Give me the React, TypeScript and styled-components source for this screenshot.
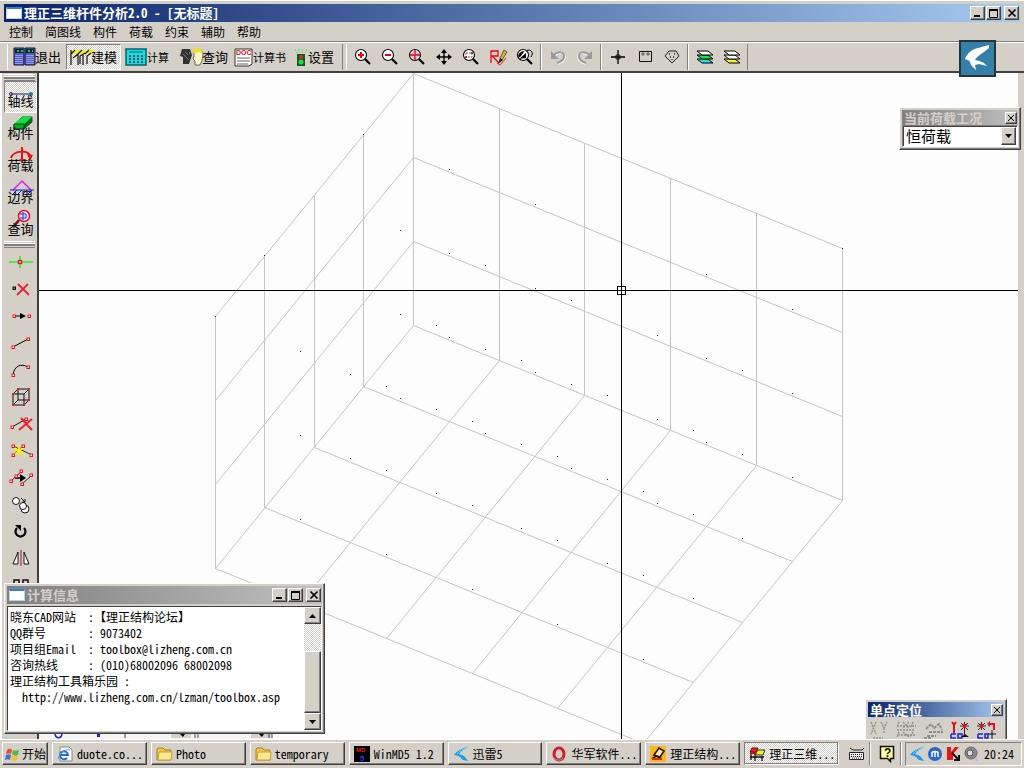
import React from "react";
import styled, { createGlobalStyle, css } from "styled-components";

const face = "#d4d0c8";
const shade = "#808080";
const dark = "#404040";
const light = "#ffffff";

const GlobalStyle = createGlobalStyle`
  * { box-sizing: border-box; }
  body {
    margin: 0;
    background: ${face};
    color: #000;
    font-family: "Noto Sans Mono CJK SC", "Noto Sans CJK SC", "Liberation Mono", monospace;
    font-size: 12px;
    line-height: 16px;
  }
  button, select { font: inherit; color: inherit; border-radius: 0; }
  button { padding: 0; border: 0; background: none; }
`;

const raised = css`
  background: ${face};
  border: 1px solid;
  border-color: ${light} ${dark} ${dark} ${light};
  box-shadow: inset -1px -1px ${shade};
`;

const checker = css`
  background: repeating-conic-gradient(${light} 0 25%, ${face} 0 50%) 0 0 / 2px 2px;
`;

const sunken = css`
  ${checker}
  border: 1px solid;
  border-color: ${shade} ${light} ${light} ${shade};
`;

/* ---------- desktop and main window ---------- */

const Desktop = styled.div`
  height: 100vh;
  display: flex;
  flex-direction: column;
  overflow: hidden;
`;

const MainWindow = styled.main`
  position: relative;
  flex: 1;
  min-height: 0;
  display: flex;
  flex-direction: column;
  overflow: hidden;
  background: ${face};
  border-top: 1px solid ${light};
  padding-top: 3px;
`;

const TitleBar = styled.header<{ $active?: boolean; $small?: boolean }>`
  display: flex;
  align-items: center;
  height: ${(p) => (p.$small ? 15 : 18)}px;
  gap: 1px;
  padding-left: 2px;
  padding-right: 1px;
  color: ${(p) => (p.$active ? light : face)};
  background: ${(p) =>
    p.$active
      ? "linear-gradient(90deg, #0a246a, #a6caf0)"
      : "linear-gradient(90deg, #808080, #c0c0c0)"};
`;

const MainTitleBar = styled(TitleBar)`
  margin: 0 4px;
`;

const Title = styled.h1`
  flex: 1;
  margin: 0;
  font-size: 13px;
  line-height: 14px;
  font-weight: 700;
  white-space: nowrap;
`;

const WindowIcon = styled.span`
  width: 16px;
  height: 12px;
  margin-right: 1px;
  background: ${light};
  border: 1px solid #b8d4f4;
  border-top: 2px solid #3a7bd8;
`;

const CaptionButton = styled.button<{ $gap?: boolean; $small?: boolean }>`
  ${raised}
  width: ${(p) => (p.$small ? 12 : 15)}px;
  height: ${(p) => (p.$small ? 12 : 14)}px;
  margin-left: ${(p) => (p.$gap ? 2 : 0)}px;
  display: grid;
  place-items: center;
  color: #000;
`;

const MenuBar = styled.nav`
  display: flex;
  gap: 12px;
  height: 20px;
  padding: 1px 9px;
  border-bottom: 1px solid ${shade};
`;

const MenuItem = styled.button`
  line-height: 16px;
`;

const ToolBar = styled.div`
  display: flex;
  align-items: stretch;
  height: 31px;
  padding: 1px 0 1px 7px;
  border-top: 1px solid ${light};
  border-bottom: 2px solid ${dark};
`;

const ToolGroup = styled.div<{ $wide?: boolean }>`
  display: flex;
  align-items: stretch;
  padding: 0 2px;
  border-left: 1px solid ${light};
  border-right: 1px solid ${shade};
  margin-right: ${(p) => (p.$wide ? 3 : 0)}px;
`;

const ModeButton = styled.button<{ $pressed?: boolean; $width: number; $tight?: boolean }>`
  display: flex;
  align-items: center;
  width: ${(p) => p.$width}px;
  padding-left: 3px;
  font-size: ${(p) => (p.$tight ? 11 : 13)}px;
  white-space: nowrap;
  border: 1px solid transparent;
  ${(p) => p.$pressed && sunken}
`;

const ToolButton = styled.button`
  width: 27px;
  display: grid;
  place-items: center;
`;

const WorkArea = styled.div`
  flex: 1;
  min-height: 0;
  display: flex;
  padding-right: 6px;
`;

const SideBar = styled.aside`
  width: 39px;
  flex: none;
  overflow: hidden;
  padding: 1px 2px 0 4px;
  border-right: 2px solid ${dark};
  box-shadow: inset 2px 0 ${light};
`;

const Grip = styled.div`
  height: 7px;
  border-top: 1px solid ${light};
  border-bottom: 1px solid ${shade};
  display: flex;
  align-items: center;
  &::before {
    content: "";
    flex: 1;
    height: 2px;
    background: ${shade};
    border-top: 1px solid ${light};
  }
`;

const SideMode = styled.button<{ $pressed?: boolean }>`
  display: grid;
  width: 33px;
  height: 32px;
  padding-bottom: 4px;
  justify-items: center;
  border: 1px solid transparent;
  font-size: 13px;
  line-height: 14px;
  ${(p) => p.$pressed && sunken}
  & > * { grid-area: 1 / 1; }
  & > svg { align-self: start; }
  & > span { align-self: end; z-index: 1; }
`;

const SideTool = styled.button`
  display: grid;
  place-items: center;
  width: 33px;
  height: 27px;
`;

const Canvas = styled.svg`
  flex: 1;
  min-width: 0;
  height: 100%;
  background: #fdfdfd;
`;

const Mark = styled.svg`
  display: block;
  overflow: visible;
`;

/* ---------- floating windows ---------- */

const Floating = styled.section`
  position: absolute;
  ${raised}
  padding: 2px;
`;

const LogoTile = styled.div`
  position: absolute;
  top: 39px;
  right: 28px;
  width: 37px;
  height: 37px;
  background: #3580a8;
  border: 2px solid #27323a;
`;

const LoadPalette = styled(Floating)`
  top: 106px;
  right: 3px;
  width: 122px;
`;

const SelectBox = styled.label`
  display: flex;
  position: relative;
  height: 22px;
  background: ${light};
  border: 1px solid;
  border-color: ${shade} ${light} ${light} ${shade};
  box-shadow: inset 1px 1px ${dark};
`;

const Select = styled.select`
  appearance: none;
  flex: 1;
  border: 0;
  background: none;
  padding: 0 16px 0 3px;
  font-size: 15px;
  line-height: 18px;
`;

const SelectArrow = styled.span`
  ${raised}
  position: absolute;
  right: 1px;
  top: 1px;
  bottom: 1px;
  width: 15px;
  display: grid;
  place-items: center;
  pointer-events: none;
`;

const PointPalette = styled(Floating)`
  right: 17px;
  bottom: -8px;
  width: 142px;
  height: 48px;
`;

const PointTools = styled.div`
  display: flex;
  padding-top: 3px;
`;

const InfoWindow = styled(Floating)`
  left: 4px;
  bottom: 5px;
  width: 321px;
  height: 151px;
  display: flex;
  flex-direction: column;
`;

const InfoBody = styled.div`
  flex: 1;
  min-height: 0;
  display: flex;
  margin-top: 2px;
  background: ${light};
  border: 1px solid;
  border-color: ${dark} ${light} ${light} ${dark};
`;

const InfoText = styled.pre`
  flex: 1;
  margin: 0;
  padding: 2px;
  font: inherit;
  line-height: 16px;
`;

const ScrollBar = styled.div`
  width: 17px;
  display: flex;
  flex-direction: column;
  ${checker}
`;

const ScrollArrow = styled.button`
  ${raised}
  height: 17px;
  display: grid;
  place-items: center;
`;

const ScrollThumb = styled.div`
  ${raised}
  height: 62px;
  margin-top: auto;
`;

/* ---------- task bar ---------- */

const TaskBar = styled.footer`
  position: relative;
  display: flex;
  align-items: flex-start;
  height: 29px;
  gap: 4px;
  padding: 2px 2px 0;
  background: ${face};
  border-top: 1px solid ${light};
`;

const TaskButton = styled.button<{ $pressed?: boolean; $start?: boolean }>`
  ${raised}
  ${(p) => p.$pressed && sunken}
  flex: ${(p) => (p.$start ? "0 0 46px" : "0 1 95px")};
  min-width: 0;
  height: 23px;
  display: flex;
  align-items: center;
  gap: ${(p) => (p.$start ? 1 : 4)}px;
  padding-left: ${(p) => (p.$start ? 2 : 4)}px;
  overflow: hidden;
  white-space: nowrap;
`;

const TrayItem = styled.button`
  height: 23px;
  width: 27px;
  display: grid;
  place-items: center;
  border-right: 1px solid ${shade};
  box-shadow: 1px 0 ${light};
`;

const Tray = styled.div`
  flex: 1 0 117px;
  height: 24px;
  display: flex;
  align-items: center;
  gap: 2px;
  padding: 0 7px 0 3px;
  border: 1px solid;
  border-color: ${shade} ${light} ${light} ${shade};
`;

const Clock = styled.time`
  margin-left: auto;
  font-size: 12px;
`;

/* ---------- drawings ---------- */

type DrawProps = { w?: number; h?: number; children: React.ReactNode };
const Draw = ({ w = 18, h = 18, children }: DrawProps) => (
  <Mark width={w} height={h} viewBox={`0 0 ${w} ${h}`} fill="none" aria-hidden="true">
    {children}
  </Mark>
);

const CloseMark = ({ small }: { small?: boolean }) => (
  <Draw w={8} h={8}>
    <path d={small ? "M1 1l6 6M7 1l-6 6" : "M0.500 0.500l7 7M7.500 0.500l-7 7"} stroke="#000" strokeWidth={small ? 1 : 1.700} />
  </Draw>
);

const Arrow = ({ up }: { up?: boolean }) => (
  <Draw w={7} h={4}>
    <path d={up ? "M0 4L3.500 0L7 4z" : "M0 0L3.500 4L7 0z"} fill="#000" />
  </Draw>
);

const CaptionButtons = () => (
  <>
    <CaptionButton aria-label="最小化">
      <Draw w={9} h={8}><path d="M1 7h6" stroke="#000" strokeWidth="2" /></Draw>
    </CaptionButton>
    <CaptionButton aria-label="最大化">
      <Draw w={9} h={9}><path d="M.5 1h8M.5 1v7.500h8V1" stroke="#000" /><path d="M0 1h9" stroke="#000" strokeWidth="2" /></Draw>
    </CaptionButton>
    <CaptionButton $gap aria-label="关闭"><CloseMark /></CaptionButton>
  </>
);

const Lens = ({ children }: { children?: React.ReactNode }) => (
  <Draw>
    <circle cx="7" cy="7" r="5.500" fill="#fff" stroke="#000" strokeWidth="1.100" />
    <path d="M11 11l5 5" stroke="#000" strokeWidth="2.200" />
    {children}
  </Draw>
);

const viewTools: [string, React.ReactNode][] = [
  ["放大", <Lens><path d="M4 7h6M7 4v6" stroke="#f00014" strokeWidth="2" /></Lens>],
  ["缩小", <Lens><path d="M4 7h6" stroke="#f00014" strokeWidth="2" /></Lens>],
  ["全图", <Lens><path d="M1.500 7h11M7 1.500v11" stroke="#e00018" strokeWidth="1.300" /><path d="M5 4h4M5 10h4M4 5v4M10 5v4" stroke="#e00018" strokeWidth=".7" /></Lens>],
  ["平移", <Draw><path d="M9 2v14M2 9h14" stroke="#000" strokeWidth="1.300" /><path d="M9 1l3 4H6zM9 17l3-4H6zM1 9l4-3v6zM17 9l-4-3v6z" fill="#000" /></Draw>],
  ["窗口缩放", <Lens><path d="M4 5h6v4H4z" stroke="#666" strokeDasharray="2 1" /><path d="M3 8h2v2H3zM9 4h2v2H9z" fill="#e02030" /></Lens>],
  ["重画", <Draw><path d="M2 15V3h7v5H3l7 7" stroke="#f00018" strokeWidth="1.300" /><path d="M11 10l4-8 3 2-5 8z" fill="#c8c020" stroke="#333" strokeWidth=".7" /><path d="M9 16l2-6 3 2z" fill="#222" /><path d="M8 15l3 2 6-7" stroke="#f02020" /></Draw>],
  ["前一视图", <Lens><path d="M3 11l7-6v5zM2.500 10c-1-4 2-7 6-7L5 8z" fill="#000" /><path d="M10 3c5-3 8 2 5 6" stroke="#000" /></Lens>],
];

const Undo = ({ flip }: { flip?: boolean }) => (
  <Draw>
    <g transform={flip ? "translate(18 0) scale(-1 1)" : undefined}>
      <path d="M5 9c4-5 12-5 11 1-.5 3-4 5-7 6" stroke="#fff" strokeWidth="1.500" />
      <path d="M4 8c4-5 12-5 11 1-.5 3-4 5-7 6" stroke="#999" strokeWidth="2" />
      <path d="M2 3v8h8z" fill="#999" />
    </g>
  </Draw>
);

const Layers = ({ a, b }: { a: string; b: string }) => (
  <Draw>
    <path d="M1 11h11l5 4H6z" fill={b} stroke="#000" />
    <path d="M1 7h11l5 4H6z" fill={a} stroke="#000" />
    <path d="M1 3h11l5 4H6z" fill="#fff" stroke="#000" />
  </Draw>
);

const node = (x: number, y: number) => (
  <rect key={`${x}-${y}`} x={x - 1} y={y - 1} width="2.500" height="2.500" stroke="#f01020" fill="#fff" />
);

const sideModes: [string, React.ReactNode][] = [
  ["轴线", <Draw w={28} h={18}><path d="M4 12h20" stroke="#102070" /><circle cx="4" cy="12" r="1.500" stroke="#102070" /><circle cx="24" cy="12" r="2" fill="#108090" /></Draw>],
  ["构件", <Draw w={28} h={18}><path d="M7 11L15 3h10v5l-8 7H7z" fill="#062" stroke="#063" /><path d="M7 10l8-7h10l-8 7z" fill="#10e040" /><path d="M7 10h10v5H7z" fill="#00b020" stroke="#042" /></Draw>],
  ["荷载", <Draw w={28} h={22}><path d="M15 1v15M4 12c3-8 18-9 20 0" stroke="#f01010" strokeWidth="2" /><path d="M20 8l6 1-3 6zM12 13h6l-3 4z" fill="#f01010" /></Draw>],
  ["边界", <Draw w={28} h={18}><path d="M6 12l9-9 9 9" stroke="#e020e0" strokeWidth="1.500" /><path d="M3 12h24M6 16l4-4M11 16l4-4M16 16l4-4M21 16l4-4" stroke="#1020e0" /></Draw>],
  ["查询", <Draw w={28} h={20}><circle cx="17" cy="6" r="5.500" fill="#e8e0ff" stroke="#e01030" strokeWidth="1.500" /><path d="M13 4h6v4h-6M16 2v8" stroke="#3030c0" /><path d="M12 10l-4 5" stroke="#701018" strokeWidth="2.500" /></Draw>],
];

const sideTools: [string, React.ReactNode][] = [
  ["加节点", <Draw w={24} h={20}><path d="M0 10h24M11 4v12" stroke="#20f020" strokeWidth="1.500" /><rect x="9.500" y="8.500" width="3" height="3" fill="#fff" stroke="#f01020" strokeWidth="1.400" /></Draw>],
  ["删节点", <Draw w={24} h={20}><rect x="4" y="8" width="2.500" height="2.500" stroke="#111" fill="#777" /><path d="M9 5l11 11M19 5L8 16" stroke="#f02030" strokeWidth="1.800" /></Draw>],
  ["移节点", <Draw w={24} h={20}>{node(5, 10)}{node(20, 10)}<path d="M7 10h5" stroke="#000" /><path d="M11 7l6 3-6 3z" fill="#000" /></Draw>],
  ["直杆", <Draw w={24} h={20}><path d="M4 14L19 6" stroke="#000" />{node(4, 14)}{node(19, 6)}</Draw>],
  ["弧杆", <Draw w={24} h={20}><path d="M4 15C5 6 12 3 19 7" stroke="#000" />{node(4, 15)}{node(19, 7)}</Draw>],
  ["立体", <Draw w={24} h={22}><path d="M4 8h11v11H4zM9 3h11v11H9zM4 8l5-5M15 8l5-5M4 19l5-5M15 19l5-5" stroke="#111" />{[[4, 8], [15, 19], [4, 19], [20, 3], [9, 3], [20, 14]].map(([x, y]) => (
    <path key={`${x}-${y}`} d={`M${x - 1} ${y - 1}h2v2h-2z`} fill="#f01020" />
  ))}</Draw>],
  ["删杆", <Draw w={24} h={20}><path d="M3 13L17 5" stroke="#111" /><path d="M12 4l11 12M23 5L10 16" stroke="#f02030" strokeWidth="2" />{node(3, 13)}{node(17, 5)}</Draw>],
  ["打断", <Draw w={24} h={20}><path d="M4 5l19 9M4 14l10-9" stroke="#333" /><path d="M4 6l12 8M16 5L5 14M10 4v10" stroke="#f8f010" strokeWidth="1.800" />{node(4, 5)}{node(4, 14)}{node(14, 5)}{node(22, 14)}</Draw>],
  ["移杆", <Draw w={24} h={20}><path d="M2 13l10-9M13 16l9-8" stroke="#333" /><path d="M6 10h8" stroke="#000" strokeWidth="1.500" /><path d="M11 6l6 4-6 4z" fill="#000" />{node(2, 13)}{node(12, 3)}{node(7, 8)}{node(13, 16)}{node(22, 7)}</Draw>],
  ["复制", <Draw w={24} h={20}><circle cx="7" cy="6" r="3.500" fill="#fff" stroke="#111" /><circle cx="16" cy="14" r="4" fill="#fff" stroke="#111" /><circle cx="14" cy="11" r="3.500" fill="#fff" stroke="#111" /><path d="M12 3l4 4m0-3v3h-3" stroke="#111" /></Draw>],
  ["旋转", <Draw w={24} h={20}><path d="M8 6a5 5 0 1 0 7 0" stroke="#000" strokeWidth="2.200" /><path d="M6 3h6v6z" fill="#000" /></Draw>],
  ["镜像", <Draw w={24} h={20}><path d="M9 3v12H4zM15 3v12h5z" fill="#fff" stroke="#111" /><path d="M12 1v16" stroke="#a01020" /></Draw>],
  ["阵列", <Draw w={24} h={20}><path d="M5 4h5v5H5zM14 4h5v5h-5zM5 14h5v5H5zM14 14h5v5h-5z" stroke="#111" strokeWidth="1.500" /></Draw>],
];

const ExitIcon = () => (
  <Draw w={21} h={18}>
    <path d="M0 0h10v17H0zM11 0h10v17H11z" fill="#5860c8" stroke="#101040" />
    <path d="M1 1h8v4H1zM12 1h8v4h-8z" fill="#002820" />
    <path d="M3 3h2M7 3h2M14 3h2M18 3h1" stroke="#10d060" strokeWidth="2" />
    <path d="M2 7v9M4 7v9M6 7v9M8 7v9M13 7v9M15 7v9M17 7v9M19 7v9" stroke="#c8d0f8" strokeDasharray="1 1" />
  </Draw>
);
const ModelIcon = () => (
  <Draw w={21} h={18}>
    <path d="M1 2h24v4H1z" fill="#f8f020" />
    <path d="M1 6l4-4M8 6l4-4M15 6l4-4M3 10l5-4v11M1 2v15M10 16V8l5-3M13 17V7M17 16V8l4-3" stroke="#111" strokeWidth="1.200" />
  </Draw>
);
const CalcIcon = () => (
  <Draw w={22} h={18}>
    <path d="M1 1h20v16H1z" fill="#10e0e8" stroke="#046070" strokeWidth="1.500" />
    <path d="M4 4h14" stroke="#065060" />
    <path d="M4 8h15M4 11h15M4 14h15" stroke="#024858" strokeWidth="2" strokeDasharray="2 2" />
  </Draw>
);
const QueryIcon = () => (
  <Draw w={22} h={19}>
    <path d="M2 1h8l2 6-3 9H3V9L0 8z" fill="#333" />
    <path d="M5 4l3 3M3 6l3 3M6 9l3 3M9 4l1 2" stroke="#777" />
    <path d="M14 4c2-4 9-3 9 2l-1 7-2 4h-5v-4l-2-2 1-3z" fill="#fff5c8" stroke="#333" strokeWidth=".7" />
    <path d="M12 3c3-5 11-3 11 3l-4-2-6 1z" fill="#f0e020" />
  </Draw>
);
const DocIcon = () => (
  <Draw w={19} h={19}>
    <path d="M1 1h17v15l-3 2H1z" fill="#fff" stroke="#333" />
    <path d="M3 10h13M3 13h13M3 16h11" stroke="#666" />
    <text x="2" y="7" fontFamily="Liberation Sans" fontSize="7" fontWeight="700" fill="#e01020">DOC</text>
  </Draw>
);
const LightIcon = () => (
  <Draw w={14} h={19}>
    <path d="M3 6h8v12H3z" fill="#0b5a28" />
    <circle cx="7" cy="9" r="2" fill="#f02020" />
    <circle cx="7" cy="14" r="2.500" fill="#20e040" />
    <path d="M1 1l2 4M5 1l1 4M9 1L8 5M13 1l-2 4" stroke="#30f050" strokeDasharray="2 1" />
  </Draw>
);

const Swallow = ({ color, size }: { color: string; size: number }) => (
  <Mark width={size} height={size} viewBox="0 0 33 33" aria-hidden="true">
    <path d="M28 3C22 5 14 6 10 9C7 11 5 14 4 17C6 18 8 18 9 20L10 23L15 28L14 23L18 22L26 24C23 20 19 19 14 18C16 14 22 11 28 6Z" fill={color} />
  </Mark>
);

const ThunderIcon = () => (
  <Draw w={16} h={16}>
    <path d="M15 1C9 2 4 5 1 9c3 0 5 1 6 2l3 3 5 1-4-5-5-2c2-3 5-5 9-7z" fill="#1898e8" />
    <path d="M15 1C10 3 6 5 4 8" stroke="#70d0f8" />
  </Draw>
);

/* Projection of a grid node onto the drawing plane. */
const project = (i: number, j: number, k: number): [number, number] => [
  Math.round(374 + 85.700 * i - 49.600 * j) + 0.500,
  Math.round(252 + 35 * i + 60.750 * j - 84 * k) + 0.500,
];

const range = (n: number) => Array.from({ length: n + 1 }, (_, i) => i);
const segment = (a: [number, number], b: [number, number]) => `M${a[0]} ${a[1]}L${b[0]} ${b[1]}`;

const gridPath = [
  ...range(5).map((i) => segment(project(i, 0, 0), project(i, 0, 3))),
  ...range(3).map((k) => segment(project(0, 0, k), project(5, 0, k))),
  ...range(4).slice(1).map((j) => segment(project(0, j, 0), project(0, j, 3))),
  ...range(3).map((k) => segment(project(0, 0, k), project(0, 4, k))),
  ...range(5).slice(1).map((i) => segment(project(i, 0, 0), project(i, 4, 0))),
  ...range(4).slice(1).map((j) => segment(project(0, j, 0), project(5, j, 0))),
].join("");

const gridNodes = [
  ...range(4).flatMap((i) =>
    range(3).flatMap((j) => range(2).map((k) => project(i + 1, j + 1, k + 1)))
  ),
  project(0, 1, 3),
  project(0, 3, 3),
  project(0, 4, 3),
  project(5, 0, 3),
];

const Model = () => (
  <Canvas role="img" aria-label="轴网">
    <path d={gridPath} stroke="#c4c4c4" fill="none" />
    {gridNodes.map(([x, y], n) => (
      <rect key={n} x={x - 0.500} y={y - 0.500} width="1" height="1" fill="#222" />
    ))}
    <path d="M0 217.500H979M582.500 0V2000" stroke="#000" />
    <rect x="578.500" y="213.500" width="8" height="8" stroke="#000" fill="none" />
    <path d="M0 661h233v5H0z" fill="#f4f4f2" />
    <path d="M16 661c1 5 6 5 7 0" stroke="#2020e0" strokeWidth="1.500" fill="none" />
    <path d="M58 661h3v3h-3z" fill="#2020e0" />
    <path d="M132 660h20v5h-20zM212 660h20v5h-20z" fill={face} />
    <path d="M86 660v5M156 660v5M159 660v5M230 660v5M233 660v5" stroke="#444" />
    <path d="M141 661h5l-2 3zM220 661h5l-2 3z" fill="#000" />
  </Canvas>
);

const pointTools = [
  <Draw w={27} h={22}><path d="M3 2l5 12M8 2L3 14M13 2l3 6 3-6M16 8v6M5 18h10" stroke="#8e8e8a" strokeDasharray="2 1" strokeWidth="1.400" /></Draw>,
  <Draw w={27} h={22}><path d="M4 2l-2 6M8 2l6 6M14 2L8 8M18 2l-2 6M2 10h18M4 12l-2 5M8 12l6 5M18 12l-3 5M2 6h19M3 15h18" stroke="#8e8e8a" strokeDasharray="2 1" strokeWidth="1.400" /></Draw>,
  <Draw w={27} h={22}><path d="M4 9l5-5 3 4 5-4 3 6M7 12h14M5 16h9M2 18h8" stroke="#8e8e8a" strokeWidth="2" strokeDasharray="3 1" /></Draw>,
  <Draw w={27} h={22}><path d="M3 2l2 3v8M7 2L5 5" stroke="#e01020" strokeWidth="2" /><path d="M11 6h9M15.500 2v14M12 3l7 7M19 3l-7 7" stroke="#402020" /><path d="M14 4h3v4h-3z" fill="#e01020" /><path d="M2 14h5M2 14v4h5M9 14h4v4H9z" stroke="#2020e0" strokeWidth="1.500" /><path d="M12 17l4-3 4 3z" fill="#111" /></Draw>,
  <Draw w={27} h={22}><path d="M1 6h9M5.500 2v8M2 3l7 7M9 3l-7 7" stroke="#402020" /><path d="M4 4h3v4H4z" fill="#e01020" /><path d="M12 4h6v6" stroke="#e01020" strokeWidth="2" /><path d="M11 4l3-3v6z" fill="#e01020" /><path d="M2 14h5M2 14v4h5M9 14h3v4H9z" stroke="#2020e0" strokeWidth="1.500" /><path d="M12 14h8M16 10v9" stroke="#111" /></Draw>,
];

const StartFlag = () => (
  <Draw w={16} h={16}>
    <path d="M2 4c2-2 4-1 5 0L6 8C4 7 3 7 1 8z" fill="#e8502c" />
    <path d="M8 4c2 1 4 1 6 0l-1 5c-2 1-4 1-6-1z" fill="#50b848" />
    <path d="M1 9c2-1 3-1 5 0l-1 5c-2-1-3-1-5 0z" fill="#3c70d8" />
    <path d="M7 9c2 2 4 1 6 1l-1 4c-2 1-4 1-6-1z" fill="#f8c020" />
  </Draw>
);
const BrowserIcon = () => (
  <Draw w={16} h={16}>
    <path d="M3 1h9l3 3v11H3z" fill="#fff" stroke="#888" />
    <path d="M3 9h8a4 4 0 1 0-1 3" stroke="#2070d8" strokeWidth="2" />
    <path d="M1 13c2-7 7-10 12-9" stroke="#50a0f0" />
  </Draw>
);
const FolderIcon = () => (
  <Draw w={16} h={16}>
    <path d="M1 3l1-1h5l2 2h6v10H1z" fill="#f0c848" stroke="#a88020" />
    <path d="M3 6h13l-1 8H2z" fill="#fce890" stroke="#c8a030" />
  </Draw>
);
const Md5Icon = () => (
  <Draw w={16} h={16}>
    <path d="M0 0h16v16H0z" fill="#000" />
    <text x="2" y="6" fontFamily="Liberation Sans" fontWeight="700" fontSize="6" fill="#f01818">MD</text>
    <text x="6" y="15" fontFamily="Liberation Sans" fontWeight="700" fontSize="8" fill="#2038f0">5</text>
  </Draw>
);
const OperaIcon = () => (
  <Draw w={16} h={16}>
    <ellipse cx="8" cy="8" rx="5" ry="6" stroke="#d02030" strokeWidth="3" />
    <path d="M2 11c3 4 8 4 10 1" stroke="#999" />
  </Draw>
);
const StructIcon = () => (
  <Draw w={16} h={16}>
    <path d="M0 0h16v16H0z" fill="#f8b820" />
    <path d="M4 9l5-7 5 3-4 6zM2 13l4-3 6 3" stroke="#301000" strokeWidth="1.600" fill="#fff0b0" />
    <path d="M2 13h10" stroke="#d03010" strokeWidth="2" />
  </Draw>
);
const FrameIcon = () => (
  <Draw w={16} h={16}>
    <path d="M1 6l2-4h6l-2 4z" fill="#f02020" stroke="#700" />
    <path d="M7 7l2-3h7l-2 5H7z" fill="#f8f020" stroke="#333" />
    <path d="M1 6h6v2H1z" fill="#c01010" />
    <path d="M2 8v6M6 8v7M13 10v5M1 11h14" stroke="#111" strokeWidth="1.300" />
  </Draw>
);

const tasks: [string, React.ReactNode][] = [
  ["duote.co...", <BrowserIcon />],
  ["Photo", <FolderIcon />],
  ["temporary", <FolderIcon />],
  ["WinMD5 1.2", <Md5Icon />],
  ["迅雷5", <ThunderIcon />],
  ["华军软件...", <OperaIcon />],
  ["理正结构...", <StructIcon />],
  ["理正三维...", <FrameIcon />],
];

const infoLines = [
  "晓东CAD网站  :【理正结构论坛】",
  "QQ群号       : 9073402",
  "项目组Email  : toolbox@lizheng.com.cn",
  "咨询热线     : (010)68002096 68002098",
  "理正结构工具箱乐园 :",
  "  http://www.lizheng.com.cn/lzman/toolbox.asp",
].join("\n");

export default function App() {
  return (
    <Desktop>
      <GlobalStyle />
      <MainWindow>
        <MainTitleBar $active>
          <WindowIcon />
          <Title>理正三维杆件分析2.0 - [无标题]</Title>
          <CaptionButtons />
        </MainTitleBar>
        <MenuBar>
          {["控制", "简图线", "构件", "荷载", "约束", "辅助", "帮助"].map((name) => (
            <MenuItem key={name}>{name}</MenuItem>
          ))}
        </MenuBar>
        <ToolBar>
          <ToolGroup $wide>
            <ModeButton $width={56}><ExitIcon />退出</ModeButton>
            <ModeButton $width={55} $pressed><ModelIcon />建模</ModeButton>
            <ModeButton $width={55} $tight><CalcIcon />计算</ModeButton>
            <ModeButton $width={54}><QueryIcon />查询</ModeButton>
            <ModeButton $width={60} $tight><DocIcon />计算书</ModeButton>
            <ModeButton $width={50}><LightIcon />设置</ModeButton>
          </ToolGroup>
          <ToolGroup>
            {viewTools.map(([name, icon]) => (
              <ToolButton key={name} aria-label={name}>{icon}</ToolButton>
            ))}
          </ToolGroup>
          <ToolGroup>
            <ToolButton aria-label="撤消"><Undo /></ToolButton>
            <ToolButton aria-label="重做"><Undo flip /></ToolButton>
          </ToolGroup>
          <ToolGroup>
            <ToolButton aria-label="捕捉">
              <Draw><path d="M9 2v14M2 9h14" stroke="#000" strokeWidth="1.300" /><path d="M7 7h4v4H7z" stroke="#000" strokeWidth=".8" /></Draw>
            </ToolButton>
            <ToolButton aria-label="单元">
              <Draw><path d="M3.500 3.500h12v10h-12z" stroke="#111" /><path d="M6 5h2v2H6zM11 5h2v2h-2z" stroke="#444" strokeWidth=".8" /></Draw>
            </ToolButton>
            <ToolButton aria-label="多边形">
              <Draw><path d="M6 3h7l3 5-7 7-7-7z" stroke="#222" /><path d="M6 6h1M11 6h1M7 9h1M10 9h1M9 11v1" stroke="#222" strokeWidth="1.500" /></Draw>
            </ToolButton>
          </ToolGroup>
          <ToolGroup>
            <ToolButton aria-label="图层"><Layers a="#20e040" b="#20e0f0" /></ToolButton>
            <ToolButton aria-label="图层设置"><Layers a="#fff" b="#f8f020" /></ToolButton>
          </ToolGroup>
        </ToolBar>
        <WorkArea>
          <SideBar>
            <Grip />
            {sideModes.map(([name, icon], n) => (
              <SideMode key={name} $pressed={n === 0}>{icon}<span>{name}</span></SideMode>
            ))}
            <Grip />
            {sideTools.map(([name, icon]) => (
              <SideTool key={name} aria-label={name}>{icon}</SideTool>
            ))}
          </SideBar>
          <Model />
        </WorkArea>

        <LogoTile><Swallow color="#fff" size={33} /></LogoTile>

        <LoadPalette>
          <TitleBar $small>
            <Title as="h2">当前荷载工况</Title>
            <CaptionButton $small aria-label="关闭"><CloseMark small /></CaptionButton>
          </TitleBar>
          <SelectBox>
            <Select aria-label="当前荷载工况"><option>恒荷载</option></Select>
            <SelectArrow><Arrow /></SelectArrow>
          </SelectBox>
        </LoadPalette>

        <InfoWindow>
          <TitleBar>
            <WindowIcon />
            <Title as="h2">计算信息</Title>
            <CaptionButtons />
          </TitleBar>
          <InfoBody>
            <InfoText>{infoLines}</InfoText>
            <ScrollBar>
              <ScrollArrow aria-label="向上"><Arrow up /></ScrollArrow>
              <ScrollThumb />
              <ScrollArrow aria-label="向下"><Arrow /></ScrollArrow>
            </ScrollBar>
          </InfoBody>
        </InfoWindow>

        <PointPalette>
          <TitleBar $active $small>
            <Title as="h2">单点定位</Title>
            <CaptionButton $small aria-label="关闭"><CloseMark small /></CaptionButton>
          </TitleBar>
          <PointTools>
            {pointTools.map((icon, n) => <React.Fragment key={n}>{icon}</React.Fragment>)}
          </PointTools>
        </PointPalette>
      </MainWindow>

      <TaskBar>
        <TaskButton $start><StartFlag />开始</TaskButton>
        {tasks.map(([name, icon], n) => (
          <TaskButton key={name} $pressed={n === tasks.length - 1}>{icon}{name}</TaskButton>
        ))}
        <TrayItem aria-label="键盘">
          <Draw w={17} h={16}><path d="M2 2l3 2h9l2-2" stroke="#222" /><path d="M1.500 6.500h14v7h-14z" fill="#eee" stroke="#222" /><path d="M3 8.500h11M3 10.500h11M4 12h9" stroke="#222" strokeDasharray="1 1" /></Draw>
        </TrayItem>
        <TrayItem aria-label="帮助">
          <Draw w={16} h={18}><path d="M1.500 1.500h13v12h-3v3l-3-3h-7z" fill="#ffffa0" stroke="#111" strokeWidth="1.500" /><text x="5" y="12" fontFamily="Liberation Sans" fontWeight="700" fontSize="12" fill="#111">?</text></Draw>
        </TrayItem>
        <Tray>
          <ThunderIcon />
          <Draw w={16} h={16}><circle cx="8" cy="8" r="7" fill="#2868c8" /><path d="M5 11V7c0-2 6-2 6 0v4M8 6v5" stroke="#fff" strokeWidth="1.500" /></Draw>
          <Draw w={16} h={16}><path d="M2 1h4v5l4-5h4L8 8v6H2z" fill="#e01818" /><path d="M7 7l7 7m0-5v5H9" stroke="#111" strokeWidth="2" /></Draw>
          <Draw w={16} h={16}><circle cx="8" cy="7" r="6" fill="#888" stroke="#666" /><circle cx="7" cy="7" r="3" fill="#ddd" stroke="#555" /><path d="M12 12h3v3h-3z" fill="#c0b8f0" /></Draw>
          <Clock>20:24</Clock>
        </Tray>
      </TaskBar>
    </Desktop>
  );
}
